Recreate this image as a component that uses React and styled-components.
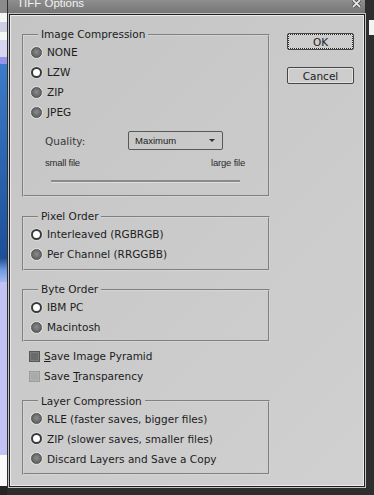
import React from 'react';
import styled, {createGlobalStyle} from 'styled-components';

const GlobalStyle = createGlobalStyle`
  html, body {
    margin: 0;
    padding: 0;
    background: #2c2c2c;
  }
  body {
    font-family: "DejaVu Sans", sans-serif;
  }
`

const Screen = styled.div`
  display: flex;
  width: 374px;
  height: 495px;
  overflow: hidden;
  background: #2c2c2c;
`

const Backdrop = styled.div`
  display: flex;
  flex-direction: column;
  flex-shrink: 0;
  width: ${p => p.$w}px;
`

const Band = styled.div`
  flex: ${p => p.$grow ? 1 : 'none'};
  height: ${p => p.$h || 0}px;
  background: ${p => p.$bg};
`

const Window = styled.div`
  flex: 1;
  display: flex;
  flex-direction: column;
  background: #2e2e2e;
`

const TitleBar = styled.div`
  display: flex;
  align-items: flex-start;
  justify-content: space-between;
  height: 13px;
  margin: 0 4px 0 1px;
  padding: 0 4px 0 9px;
  overflow: hidden;
  background: linear-gradient(#8e8e8e, #767676);

  .title {
    margin-top: -5px;
    font-family: "Liberation Sans", Arial, sans-serif;
    font-size: 11.5px;
    line-height: 16px;
    color: #f2f2f2;
  }
`

const Body = styled.div`
  flex: 1;
  display: flex;
  gap: 17px;
  margin: 2px 5px 9px 3px;
  padding: 12px 0 0 11px;
  border: 1px solid #ececec;
  box-shadow: 0 0 0 1px #1e1e1e, 0 0 0 2px #c4c4c4;
  background: linear-gradient(135deg, #c5c5c5, #d0d0d0);
  color: #1c1c1c;
  font-size: 10.5px;
`

const Column = styled.div`
  display: flex;
  flex-direction: column;
  width: 248px;
`

const Group = styled.fieldset`
  margin: ${p => p.$mt || 0}px 0 0;
  padding: 1px 0 ${p => p.$pb}px 7px;
  min-width: 0;
  border: 2px groove #d4d4d4;

  legend {
    margin-left: 7px;
    padding: 0 3px;
    line-height: 13px;
  }
`

const Row = styled.label`
  display: flex;
  align-items: center;
  gap: 5px;
  height: 20px;
  white-space: nowrap;
`

const Radio = styled.span`
  box-sizing: border-box;
  flex-shrink: 0;
  width: 11px;
  height: 11px;
  border-radius: 50%;
  background: ${p => p.$on
    ? '#ffffff'
    : 'radial-gradient(circle at 50% 45%, #8c8c8c 0, #6c6c6c 55%, #4e4e4e 100%)'};
  border: ${p => p.$on ? '2px solid #3a3a3a' : '1px solid #555'};
  box-shadow: 0 0 0 1px rgba(255, 255, 255, .35);
`

const QualityRow = styled.div`
  display: flex;
  align-items: center;
  margin: 9px 0 0 14px;

  .label {
    width: 83px;
    color: #3a3a3a;
  }
`

const Select = styled.div`
  box-sizing: border-box;
  display: flex;
  align-items: center;
  justify-content: space-between;
  width: 95px;
  height: 19px;
  padding: 0 7px 0 6px;
  border: 1px solid #585858;
  border-radius: 2px;
  font-family: "Liberation Sans", Arial, sans-serif;
  font-size: 9.5px;
  color: #222;

  .arrow {
    width: 0;
    height: 0;
    border-left: 3px solid transparent;
    border-right: 3px solid transparent;
    border-top: 3px solid #333;
  }
`

const SizeLabels = styled.div`
  display: flex;
  justify-content: space-between;
  width: 200px;
  height: 14px;
  margin: 6px 0 0 14px;
  font-family: "Liberation Sans", Arial, sans-serif;
  font-size: 9.5px;
  letter-spacing: -0.2px;
  line-height: 14px;
  color: #2a2a2a;
`

const Track = styled.div`
  width: 189px;
  height: 2px;
  margin: 10px 0 0 20px;
  background: #8a8a8a;
  box-shadow: 0 1px 0 #dedede;
`

const CheckList = styled.div`
  display: flex;
  flex-direction: column;
  margin-top: 4px;
  padding-left: 7px;
`

const CheckRow = styled(Row)`
  gap: 4px;

  u {
    text-decoration: underline;
    text-underline-offset: 1px;
  }
`

const Box = styled.span`
  box-sizing: border-box;
  flex-shrink: 0;
  width: 11px;
  height: 11px;
  background: ${p => p.$dim ? '#a9a9a9' : '#6a6a6a'};
  border: 1px solid ${p => p.$dim ? '#9c9c9c' : '#575757'};
  box-shadow: inset 0 0 0 1px ${p => p.$dim ? '#b2b2b2' : '#7c7c7c'};
`

const Buttons = styled.div`
  display: flex;
  flex-direction: column;
  gap: 17px;
  padding-top: 5px;
`

const Button = styled.button`
  box-sizing: border-box;
  width: 67px;
  height: 17px;
  padding: 0;
  border: 1px solid #464646;
  border-radius: 2px;
  outline: ${p => p.$default ? '1px dotted #2a2a2a' : 'none'};
  outline-offset: -2px;
  background: #cdcdcd;
  box-shadow: inset 0 0 0 1px #e2e2e2;
  font-family: "DejaVu Sans", sans-serif;
  font-size: 10.5px;
  color: #1c1c1c;
`

const leftBands = [
    {h: 13, bg: '#8b8b8b'},
    {h: 9, bg: '#f6f6f6'},
    {h: 10, bg: '#cfcfe2'},
    {h: 8, bg: '#f6f6f6'},
    {h: 17, bg: '#d6d6f2'},
    {h: 7, bg: '#9494ea'},
    {h: 194, bg: 'linear-gradient(#3b7bc9, #1c5098)'},
    {h: 24, bg: 'linear-gradient(#204f90, #6f9ae0, #a8b8f0)'},
    {h: 173, bg: '#c2c2f4'},
    {h: 31, bg: '#fafafa'},
    {grow: true, bg: '#262626'},
]

const rightBands = [
    {h: 20, bg: '#2e2e2e'},
    {h: 15, bg: '#f4f4f4'},
    {grow: true, bg: '#2e2e2e'},
]

const RadioGroup = ({title, items, selected, mt, pb, children}) => (
    <Group $mt={mt} $pb={pb}>
        <legend>{title}</legend>
        {items.map(item => (
            <Row key={item}>
                <Radio $on={item === selected}/>
                {item}
            </Row>
        ))}
        {children}
    </Group>
)

const CloseIcon = () => (
    <svg width="9" height="8" viewBox="0 0 9 8">
        <path d="M1 0 L8 7 M8 0 L1 7" stroke="#3a3a3a" strokeWidth="3.2"/>
        <path d="M1 0 L8 7 M8 0 L1 7" stroke="#e6e6e6" strokeWidth="1.8"/>
    </svg>
)

const App = () => {
    return (
        <Screen>
            <GlobalStyle/>
            <Backdrop $w={7}>
                {leftBands.map((b, i) => <Band key={i} $h={b.h} $bg={b.bg} $grow={b.grow}/>)}
            </Backdrop>
            <Window>
                <TitleBar>
                    <span className={'title'}>TIFF Options</span>
                    <CloseIcon/>
                </TitleBar>
                <Body>
                    <Column>
                        <RadioGroup title={'Image Compression'} items={['NONE', 'LZW', 'ZIP', 'JPEG']}
                                    selected={'LZW'} pb={13}>
                            <QualityRow>
                                <span className={'label'}>Quality:</span>
                                <Select>
                                    Maximum
                                    <span className={'arrow'}/>
                                </Select>
                            </QualityRow>
                            <SizeLabels>
                                <span>small file</span>
                                <span>large file</span>
                            </SizeLabels>
                            <Track/>
                        </RadioGroup>
                        <RadioGroup title={'Pixel Order'} mt={13} pb={5}
                                    items={['Interleaved (RGBRGB)', 'Per Channel (RRGGBB)']}
                                    selected={'Interleaved (RGBRGB)'}/>
                        <RadioGroup title={'Byte Order'} mt={12} pb={3}
                                    items={['IBM PC', 'Macintosh']} selected={'IBM PC'}/>
                        <CheckList>
                            <CheckRow>
                                <Box/>
                                <span><u>S</u>ave Image Pyramid</span>
                            </CheckRow>
                            <CheckRow>
                                <Box $dim/>
                                <span>Save <u>T</u>ransparency</span>
                            </CheckRow>
                        </CheckList>
                        <RadioGroup title={'Layer Compression'} mt={8.5} pb={4}
                                    items={['RLE (faster saves, bigger files)', 'ZIP (slower saves, smaller files)',
                                        'Discard Layers and Save a Copy']}
                                    selected={'ZIP (slower saves, smaller files)'}/>
                    </Column>
                    <Buttons>
                        <Button $default>OK</Button>
                        <Button>Cancel</Button>
                    </Buttons>
                </Body>
            </Window>
            <Backdrop $w={5}>
                {rightBands.map((b, i) => <Band key={i} $h={b.h} $bg={b.bg} $grow={b.grow}/>)}
            </Backdrop>
        </Screen>
    );
};

export default App;
